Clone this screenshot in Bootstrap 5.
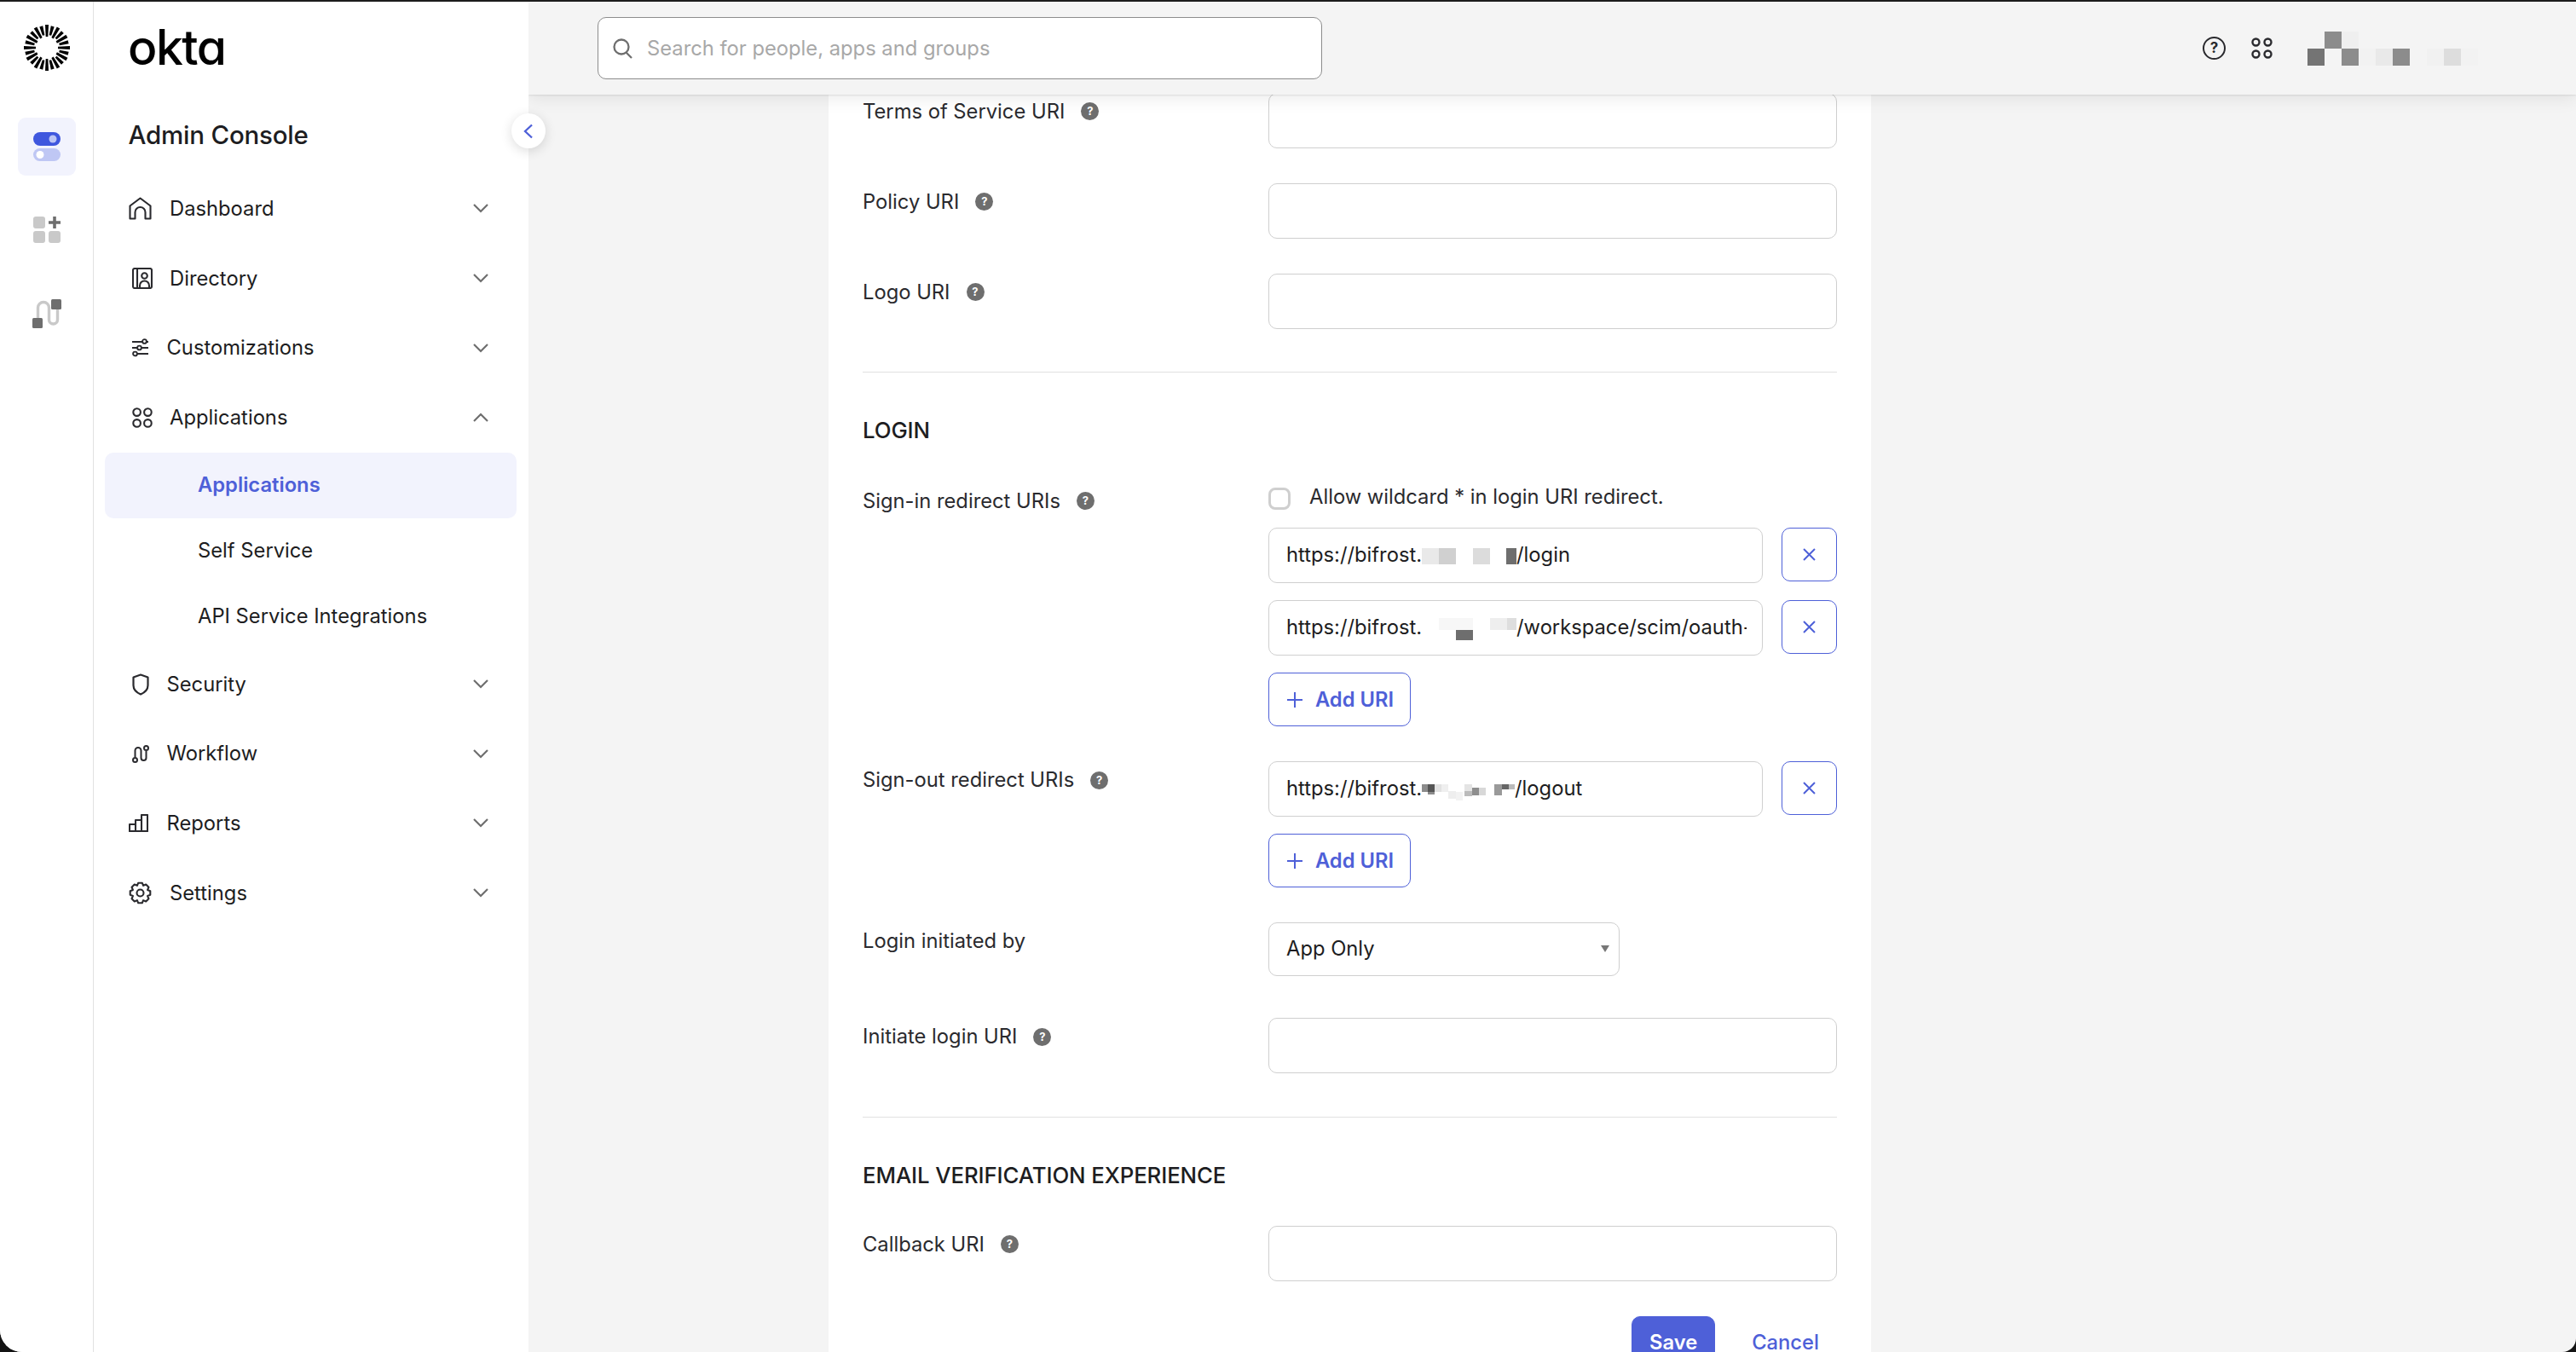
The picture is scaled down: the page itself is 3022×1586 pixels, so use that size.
<!DOCTYPE html>
<html lang="en">
<head>
<meta charset="utf-8">
<title>Okta Admin Console</title>
<link href="https://cdn.jsdelivr.net/npm/bootstrap@5.3.0/dist/css/bootstrap.min.css" rel="stylesheet">
<style>
:root{--ink:#1d1d21;--blue:#4e60d8;--bs-body-font-family:Inter,"Liberation Sans",sans-serif;--bs-body-font-size:23.75px;--bs-body-color:#1d1d21}
html,body{height:100%;background:#141414;overflow:hidden}
.shell{height:1586px;border-top:2px solid #1c1c1c;border-radius:0 0 16px 26px;overflow:hidden;background:#f4f4f4}
.mw0{min-width:0}
.rail{width:110px;background:#fff;border-right:1px solid #e1e1e1;flex:none}
.ring{margin-top:24px;margin-bottom:52px}
.rail-btn{width:68px;height:68px;border-radius:9px;margin-bottom:30px}
.rail-btn.on{background:#f2f3fd}
.side{width:510px;background:#fff;flex:none;position:relative;z-index:3}
.brand{font-size:57px;line-height:58px;font-weight:500;letter-spacing:-1.5px;color:#000;font-feature-settings:"cv11";padding:25px 0 0 40px;height:85px}
.console{font-size:29.5px;line-height:40px;font-weight:500;padding-left:40.5px;margin:50.5px 0 26.5px;letter-spacing:-.2px}
.side .nav-link{color:var(--ink);height:81.7px;padding:0 47px 0 41px}
.side .ibox{flex:none;display:flex;align-items:center}
.ibox.w1{width:48px}.ibox.w2{width:44.5px}
.side .sub{margin:0 14px 0 13px;height:77px;padding:0 0 0 109px;border-radius:10px}
.side .sub.active{background:#f2f3fd;color:var(--blue);font-weight:600}
.collapse-btn{position:absolute;top:131px;right:-20px;width:40px;height:41px;border-radius:50%;background:#fff;border:0;padding:0;box-shadow:0 3px 14px rgba(0,0,0,.14);z-index:4}
.topbar{height:109px;background:#f4f4f4;box-shadow:0 1px 2px rgba(0,0,0,.09),0 6px 18px rgba(0,0,0,.07);position:relative;z-index:2;padding:0 115px 0 81px}
.search{width:850px;height:73px;border:1.5px solid #8c8c8c;border-radius:10px;background:#fff;padding:0 17px;gap:16px}
.search .form-control{font-size:23.75px;border:0;padding:0;box-shadow:none;background:transparent;height:auto;color:var(--ink)}
.search .form-control::placeholder{color:#a8a8a8}
.tool{margin-left:30px}
.qmark{width:27px;height:27px;border:2.4px solid #2a2a2e;border-radius:50%;font-size:17px;font-weight:700;line-height:1;color:#2a2a2e}
.mosaic{margin-left:41px}
.content{overflow:hidden}
.panel{margin-left:352px;width:1223px;background:#fff;padding:0 40px;min-height:1600px}
.frow{margin-bottom:41px}
.frow.first{margin-top:-2.5px}
.frow.tall{margin-bottom:49.5px}
.lbl{width:476px;height:41px;padding-top:3px;gap:19px;flex:none;margin:0;color:#2a2a2e}
.hint{width:21px;height:21px;border-radius:50%;background:#6e6e6e;color:#fff;font-size:13px;font-weight:700;line-height:1;flex:none}
.form-control,.form-select{height:65px;border:1.5px solid #cfcfcf;border-radius:10px;font-size:23.75px;padding:0 20px;color:var(--ink)}
.uri-row{gap:22px;margin-bottom:20px}
.uri{white-space:nowrap;overflow:hidden;line-height:62px;padding-right:0;flex:1 1 0;min-width:0}
.uri-clip{display:block;width:540px;overflow:hidden}
.uri svg{vertical-align:middle}
.form-select{height:62.5px;width:412px;background-size:10px 8px;background-position:right 11px center;background-image:url("data:image/svg+xml,%3Csvg xmlns='http://www.w3.org/2000/svg' viewBox='0 0 10 8'%3E%3Cpath fill='%23777' d='M0 0h10L5 8z'/%3E%3C/svg%3E")}
.rule{margin:50.5px 0 48px;border:0;border-top:1px solid #e1e1e1;opacity:1}
.sect{font-size:25.8px;line-height:40px;font-weight:500;margin:0 0 40.5px;letter-spacing:-.1px;color:#1d1d21}
.sect-b{margin-bottom:39px}
.wild{height:34px;margin-bottom:19.5px;gap:22px;color:#2a2a2e}
.wild .form-check-input{width:26px;height:26px;margin:5px 0 0;border:3px solid #cfcfcf;border-radius:8px;flex:none}
.del{width:65.5px;height:63px;flex:none;border:1.5px solid var(--blue);border-radius:10px;padding:0;background:#fff}
.add{width:167px;height:63px;border:1.5px solid var(--blue);border-radius:10px;color:var(--blue);font-size:23.75px;font-weight:600;padding:0 0 0 2px;gap:15px;background:#fff}
.actions{gap:22px}
.save{width:98px;height:63px;padding:0;background:var(--blue);border-color:var(--blue);border-radius:10px;font-size:23.75px;font-weight:600}
.cancel{color:var(--blue);font-size:23.75px;font-weight:500;padding:0 21px;height:63px;border:0;text-decoration:none}
</style>
</head>
<body>
<div class="shell d-flex">

  <div class="rail d-flex flex-column align-items-center">
    <svg class="ring" width="60" height="60" viewBox="0 0 60 60" aria-label="Okta"><defs><polygon id="t1" points="28.7,17 31.3,17 32,3 28,3"/><polygon id="t2" points="28.7,15 31.3,15 32,4 28,4"/></defs>
      <use href="#t1"/><use href="#t2" transform="rotate(15 30 30)"/><use href="#t1" transform="rotate(30 30 30)"/><use href="#t2" transform="rotate(45 30 30)"/><use href="#t1" transform="rotate(60 30 30)"/><use href="#t2" transform="rotate(75 30 30)"/><use href="#t1" transform="rotate(90 30 30)"/><use href="#t2" transform="rotate(105 30 30)"/><use href="#t1" transform="rotate(120 30 30)"/><use href="#t2" transform="rotate(135 30 30)"/><use href="#t1" transform="rotate(150 30 30)"/><use href="#t2" transform="rotate(165 30 30)"/><use href="#t1" transform="rotate(180 30 30)"/><use href="#t2" transform="rotate(195 30 30)"/><use href="#t1" transform="rotate(210 30 30)"/><use href="#t2" transform="rotate(225 30 30)"/><use href="#t1" transform="rotate(240 30 30)"/><use href="#t2" transform="rotate(255 30 30)"/><use href="#t1" transform="rotate(270 30 30)"/><use href="#t2" transform="rotate(285 30 30)"/><use href="#t1" transform="rotate(300 30 30)"/><use href="#t2" transform="rotate(315 30 30)"/><use href="#t1" transform="rotate(330 30 30)"/><use href="#t2" transform="rotate(345 30 30)"/>
    </svg>
    <div class="rail-btn on d-flex align-items-center justify-content-center">
      <svg width="32" height="34" viewBox="0 0 32 34"><rect width="32" height="16" rx="8" fill="#3f57de"/><circle cx="23" cy="8" r="4.5" fill="#bcc5f5"/><rect y="19" width="32" height="15" rx="7.5" fill="#bfc7f4"/><circle cx="8" cy="26.5" r="4.5" fill="#fff"/></svg>
    </div>
    <div class="rail-btn d-flex align-items-center justify-content-center">
      <svg width="32" height="32" viewBox="0 0 32 32"><rect width="14" height="14" rx="3" fill="#c9c9c9"/><rect y="17" width="14" height="14" rx="3" fill="#c9c9c9"/><rect x="18" y="17" width="14" height="14" rx="3" fill="#c9c9c9"/><path d="M25 0v14M18 7h14" stroke="#6e6e6e" stroke-width="3.6"/></svg>
    </div>
    <div class="rail-btn d-flex align-items-center justify-content-center">
      <svg width="34" height="34" viewBox="0 0 34 34"><path d="M6.500 23V10a6.500 6.500 0 0 1 13 0v14a5 5 0 0 0 10 0V11" fill="none" stroke="#c9c9c9" stroke-width="3.400"/><rect x="22" width="12" height="12" rx="1.500" fill="#6e6e6e"/><rect y="22" width="12" height="12" rx="1.500" fill="#6e6e6e"/></svg>
    </div>
  </div>

  <nav class="side">
    <div class="brand">okta</div>
    <div class="console">Admin Console</div>
    <ul class="nav flex-column">
      <li class="nav-item"><a class="nav-link d-flex align-items-center" href="#"><span class="ibox w1"><svg width="27" height="27" viewBox="0 0 27 27" fill="none" stroke="#2a2a2e" stroke-width="2.100" stroke-linejoin="round"><path d="M1.500 25.500V10.500L13.500 1.500l12 9v15h-6V18a6 6 0 0 0-12 0v7.500z"/></svg></span>Dashboard<svg class="ms-auto" width="18" height="11" viewBox="0 0 18 11" fill="none" stroke="#6e6e6e" stroke-width="2.200"><path d="M1 1l8 8 8-8"/></svg></a></li>
      <li class="nav-item"><a class="nav-link d-flex align-items-center" href="#"><span class="ibox w1"><svg class="ms-1" width="24" height="25" viewBox="0 0 24 25" fill="none" stroke="#2a2a2e" stroke-width="2.100"><rect x="1" y="1" width="22" height="23" rx="2"/><path d="M6 1v23"/><circle cx="14.500" cy="9.500" r="3.300"/><path d="M9 24v-3a5.500 5.500 0 0 1 11 0v3"/></svg></span>Directory<svg class="ms-auto" width="18" height="11" viewBox="0 0 18 11" fill="none" stroke="#6e6e6e" stroke-width="2.200"><path d="M1 1l8 8 8-8"/></svg></a></li>
      <li class="nav-item"><a class="nav-link d-flex align-items-center" href="#"><span class="ibox w2"><svg class="ms-1" width="19" height="22" viewBox="0 0 19 22" fill="none" stroke="#2a2a2e" stroke-width="1.900"><path d="M0 4h12M17 4h2M0 11h6M11 11h8M6 18h13"/><circle cx="14.500" cy="3.500" r="2.400"/><circle cx="8.500" cy="11" r="2.400"/><circle cx="3.500" cy="18" r="2.400"/></svg></span>Customizations<svg class="ms-auto" width="18" height="11" viewBox="0 0 18 11" fill="none" stroke="#6e6e6e" stroke-width="2.200"><path d="M1 1l8 8 8-8"/></svg></a></li>
      <li class="nav-item"><a class="nav-link d-flex align-items-center" href="#"><span class="ibox w1"><svg class="ms-1" width="24" height="24" viewBox="0 0 24 24" fill="none" stroke="#2a2a2e" stroke-width="2.100"><circle cx="5.600" cy="5.600" r="4.300"/><circle cx="18.400" cy="5.600" r="4.300"/><circle cx="5.600" cy="18.400" r="4.300"/><circle cx="18.400" cy="18.400" r="4.300"/></svg></span>Applications<svg class="ms-auto" width="18" height="11" viewBox="0 0 18 11" fill="none" stroke="#6e6e6e" stroke-width="2.200"><path d="M1 10l8-8 8 8"/></svg></a></li>
      <li class="nav-item"><a class="nav-link sub active d-flex align-items-center" href="#">Applications</a></li>
      <li class="nav-item"><a class="nav-link sub d-flex align-items-center" href="#">Self Service</a></li>
      <li class="nav-item"><a class="nav-link sub d-flex align-items-center" href="#">API Service Integrations</a></li>
      <li class="nav-item"><a class="nav-link d-flex align-items-center" href="#"><span class="ibox w2"><svg class="ms-1" width="20" height="26" viewBox="0 0 20 26" fill="none" stroke="#2a2a2e" stroke-width="2.200" stroke-linejoin="round"><path d="M1.500 4.500L10 1.500l8.500 3V14c0 5-4 8.500-8.500 10.500C5.500 22.500 1.500 19 1.500 14z"/></svg></span>Security<svg class="ms-auto" width="18" height="11" viewBox="0 0 18 11" fill="none" stroke="#6e6e6e" stroke-width="2.200"><path d="M1 1l8 8 8-8"/></svg></a></li>
      <li class="nav-item"><a class="nav-link d-flex align-items-center" href="#"><span class="ibox w2"><svg class="ms-1" width="20" height="21" viewBox="0 0 20 21" fill="none" stroke="#2a2a2e" stroke-width="2"><circle cx="3.500" cy="17.500" r="2.500"/><circle cx="16.500" cy="3.500" r="2.500"/><path d="M3.500 14V6.500a3.500 3.500 0 0 1 7 0V15a3 3 0 0 0 6 0V7"/></svg></span>Workflow<svg class="ms-auto" width="18" height="11" viewBox="0 0 18 11" fill="none" stroke="#6e6e6e" stroke-width="2.200"><path d="M1 1l8 8 8-8"/></svg></a></li>
      <li class="nav-item"><a class="nav-link d-flex align-items-center" href="#"><span class="ibox w2"><svg width="23" height="21" viewBox="0 0 23 21" fill="none" stroke="#2a2a2e" stroke-width="2.100" stroke-linejoin="round"><path d="M1 20V12h7V20zM8 20V7h7V20zM15 20V1h7V20z"/></svg></span>Reports<svg class="ms-auto" width="18" height="11" viewBox="0 0 18 11" fill="none" stroke="#6e6e6e" stroke-width="2.200"><path d="M1 1l8 8 8-8"/></svg></a></li>
      <li class="nav-item"><a class="nav-link d-flex align-items-center" href="#"><span class="ibox w1"><svg width="27" height="27" viewBox="-13.500 -13.500 27 27" fill="none" stroke="#2a2a2e" stroke-width="2.100" stroke-linejoin="round"><path d="M11.780 -2.290L11.780 2.290L8.590 3.560L9.950 6.710L6.710 9.950L3.560 8.590L2.290 11.780L-2.290 11.780L-3.560 8.590L-6.710 9.950L-9.950 6.710L-8.590 3.560L-11.780 2.290L-11.780 -2.290L-8.590 -3.560L-9.950 -6.710L-6.710 -9.950L-3.560 -8.590L-2.290 -11.780L2.290 -11.780L3.560 -8.590L6.710 -9.950L9.950 -6.710L8.590 -3.560Z"/><circle r="4"/></svg></span>Settings<svg class="ms-auto" width="18" height="11" viewBox="0 0 18 11" fill="none" stroke="#6e6e6e" stroke-width="2.200"><path d="M1 1l8 8 8-8"/></svg></a></li>
    </ul>
    <button class="collapse-btn d-flex align-items-center justify-content-center" aria-label="Collapse"><svg width="12" height="18" viewBox="0 0 12 18" fill="none" stroke="#4e60d8" stroke-width="2.300"><path d="M10 1.500L2 9l8 7.500"/></svg></button>
  </nav>

  <main class="flex-grow-1 d-flex flex-column mw0">
    <header class="topbar d-flex align-items-center flex-shrink-0">
      <div class="search d-flex align-items-center">
        <svg width="24" height="24" viewBox="0 0 24 24" fill="none" stroke="#6e6e6e" stroke-width="2.300" class="flex-shrink-0"><circle cx="10" cy="10" r="8.500"/><path d="M15.500 16.500L22 23"/></svg>
        <input class="form-control" type="text" placeholder="Search for people, apps and groups">
      </div>
      <span class="qmark d-inline-flex align-items-center justify-content-center ms-auto">?</span>
      <svg class="tool" width="25" height="25" viewBox="0 0 25 25" fill="none" stroke="#2a2a2e" stroke-width="2.400"><circle cx="5.500" cy="5.500" r="4"/><circle cx="19.500" cy="5.500" r="4"/><circle cx="5.500" cy="19.500" r="4"/><circle cx="19.500" cy="19.500" r="4"/></svg>
      <svg class="mosaic" width="200" height="40" viewBox="0 0 200 40" aria-hidden="true"><rect x="20" width="20" height="20" fill="#8c8c8c"/><rect x="40" width="20" height="20" fill="#efefef"/><rect y="20" width="20" height="20" fill="#747474"/><rect x="40" y="20" width="20" height="20" fill="#8c8c8c"/><rect x="60" y="20" width="20" height="20" fill="#f2f2f2"/><rect x="80" y="20" width="20" height="20" fill="#e9e9e9"/><rect x="100" y="20" width="20" height="20" fill="#8c8c8c"/><rect x="140" y="20" width="20" height="20" fill="#f1f1f1"/><rect x="160" y="20" width="20" height="20" fill="#dddddd"/><rect x="180" y="20" width="20" height="20" fill="#f2f2f2"/></svg>
    </header>

    <div class="content flex-grow-1">
      <section class="panel">
        <div class="frow first d-flex"><label class="lbl d-flex align-items-center">Terms of Service URI<span class="hint d-inline-flex align-items-center justify-content-center">?</span></label><div class="flex-grow-1"><input class="form-control" type="text"></div></div>
        <div class="frow d-flex"><label class="lbl d-flex align-items-center">Policy URI<span class="hint d-inline-flex align-items-center justify-content-center">?</span></label><div class="flex-grow-1"><input class="form-control" type="text"></div></div>
        <div class="frow d-flex"><label class="lbl d-flex align-items-center">Logo URI<span class="hint d-inline-flex align-items-center justify-content-center">?</span></label><div class="flex-grow-1"><input class="form-control" type="text"></div></div>
        <hr class="rule">
        <h2 class="sect">LOGIN</h2>

        <div class="frow d-flex"><label class="lbl d-flex align-items-center">Sign-in redirect URIs<span class="hint d-inline-flex align-items-center justify-content-center">?</span></label>
          <div class="flex-grow-1 mw0">
            <div class="wild d-flex align-items-center"><input class="form-check-input" type="checkbox"><span>Allow wildcard * in login URI redirect.</span></div>
            <div class="d-flex uri-row">
              <div class="form-control uri"><span class="uri-clip">https://bifrost.<svg width="111" height="19" viewBox="0 0 111 19"><rect width="20" height="19" fill="#e9e9e9"/><rect x="20" width="20" height="19" fill="#d0d0d0"/><rect x="60" width="20" height="19" fill="#dcdcdc"/><rect x="99" width="12" height="19" fill="#6e6e6e"/></svg>/login</span></div>
              <button class="del btn d-flex align-items-center justify-content-center" aria-label="Remove"><svg width="15" height="15" viewBox="0 0 15 15" stroke="#4e60d8" stroke-width="2"><path d="M1 1l13 13M14 1L1 14"/></svg></button>
            </div>
            <div class="d-flex uri-row">
              <div class="form-control uri"><span class="uri-clip">https://bifrost.<svg width="111" height="26" viewBox="0 0 111 26"><rect x="20" width="40" height="14" fill="#f7f7f7"/><rect x="40" y="14" width="20" height="12" fill="#6e6e6e"/><rect x="80" width="20" height="14" fill="#eeeeee"/><rect x="100" width="11" height="14" fill="#dedede"/></svg>/workspace/scim/oauth-callback</span></div>
              <button class="del btn d-flex align-items-center justify-content-center" aria-label="Remove"><svg width="15" height="15" viewBox="0 0 15 15" stroke="#4e60d8" stroke-width="2"><path d="M1 1l13 13M14 1L1 14"/></svg></button>
            </div>
            <button class="add btn d-flex align-items-center justify-content-center"><svg width="18" height="18" viewBox="0 0 18 18" stroke="#4e60d8" stroke-width="2"><path d="M9 0v18M0 9h18"/></svg>Add URI</button>
          </div>
        </div>

        <div class="frow d-flex"><label class="lbl d-flex align-items-center">Sign-out redirect URIs<span class="hint d-inline-flex align-items-center justify-content-center">?</span></label>
          <div class="flex-grow-1 mw0">
            <div class="d-flex uri-row">
              <div class="form-control uri"><span class="uri-clip">https://bifrost.<svg width="109" height="25" viewBox="0 0 109 25"><rect y="6" width="7" height="9" fill="#8c8c8c"/><rect x="7" y="6" width="8" height="9" fill="#555"/><rect x="15" y="6" width="8" height="9" fill="#e2e2e2"/><rect x="23" y="6" width="8" height="9" fill="#efefef"/><rect x="7" y="15" width="8" height="3" fill="#8c8c8c"/><rect x="31" y="14" width="9" height="9" fill="#eeeeee"/><rect x="40" y="15" width="8" height="10" fill="#f2f2f2"/><rect x="50" y="6" width="9" height="9" fill="#e4e4e4"/><rect x="50" y="14" width="9" height="6" fill="#bbbbbb"/><rect x="59" y="10" width="8" height="9" fill="#8e8e8e"/><rect x="67" y="10" width="8" height="9" fill="#d8d8d8"/><rect x="85" y="6" width="9" height="13" fill="#9a9a9a"/><rect x="94" y="6" width="8" height="6" fill="#666"/><rect x="102" y="6" width="7" height="6" fill="#bbbbbb"/></svg>/logout</span></div>
              <button class="del btn d-flex align-items-center justify-content-center" aria-label="Remove"><svg width="15" height="15" viewBox="0 0 15 15" stroke="#4e60d8" stroke-width="2"><path d="M1 1l13 13M14 1L1 14"/></svg></button>
            </div>
            <button class="add btn d-flex align-items-center justify-content-center"><svg width="18" height="18" viewBox="0 0 18 18" stroke="#4e60d8" stroke-width="2"><path d="M9 0v18M0 9h18"/></svg>Add URI</button>
          </div>
        </div>

        <div class="frow tall d-flex"><label class="lbl d-flex align-items-center">Login initiated by</label><div class="flex-grow-1"><select class="form-select"><option>App Only</option><option>Either Okta or App</option></select></div></div>
        <div class="frow d-flex"><label class="lbl d-flex align-items-center">Initiate login URI<span class="hint d-inline-flex align-items-center justify-content-center">?</span></label><div class="flex-grow-1"><input class="form-control" type="text"></div></div>
        <hr class="rule">
        <h2 class="sect sect-b">EMAIL VERIFICATION EXPERIENCE</h2>
        <div class="frow d-flex"><label class="lbl d-flex align-items-center">Callback URI<span class="hint d-inline-flex align-items-center justify-content-center">?</span></label><div class="flex-grow-1"><input class="form-control" type="text"></div></div>
        <div class="d-flex justify-content-end align-items-center actions"><button class="btn btn-primary save">Save</button><a class="btn cancel d-flex align-items-center" href="#">Cancel</a></div>
      </section>
    </div>
  </main>
</div>
<script src="https://cdn.jsdelivr.net/npm/bootstrap@5.3.0/dist/js/bootstrap.bundle.min.js"></script>
</body>
</html>
